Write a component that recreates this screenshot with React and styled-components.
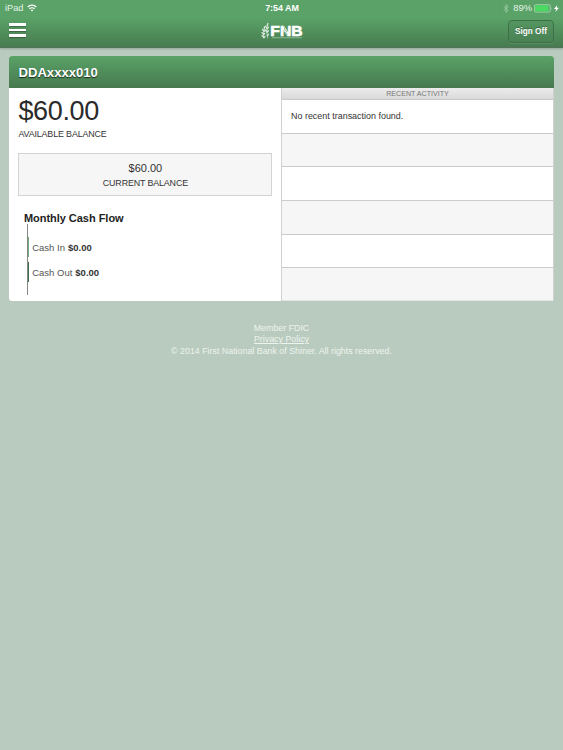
import React from 'react'
import styled, { createGlobalStyle } from 'styled-components'

const GlobalStyle = createGlobalStyle`
  * {
    box-sizing: border-box;
  }
  body {
    margin: 0;
    min-height: 100vh;
    background-color: #b9cbbe;
    color: #333;
    font-family: 'Liberation Sans', Arial, sans-serif;
  }
`

const TopBar = styled.header`
  height: 48px;
  background: linear-gradient(#5aa267 0, #5aa267 18px, #477b50 47px);
  border-bottom: 1px solid #527259;
  box-shadow: 0 1px 2px rgba(0,0,0,0.2);
  color: #fff;
`

const StatusBar = styled.div`
  display: grid;
  grid-template-columns: 1fr auto 1fr;
  align-items: center;
  height: 16px;
  padding: 0 4px 0 5px;
  font-size: 9.2px;
  line-height: 16px;
`

const StatusSide = styled.div`
  display: flex;
  align-items: center;
  justify-content: ${props => props.$end ? 'flex-end' : 'flex-start'};
  gap: ${props => props.$end ? '2px' : '3.5px'};
  color: #e6f3e8;
`

const Percent = styled.span`
  margin: 0 0 0 2px;
  font-size: 9.4px;
`

const Clock = styled.div`
  font-weight: bold;
  font-size: 8.9px;
`

const NavRow = styled.div`
  display: grid;
  grid-template-columns: 1fr auto 1fr;
  align-items: center;
  height: 30px;
  padding: 0 9px;
`

const MenuButton = styled.button`
  display: flex;
  flex-direction: column;
  gap: 3px;
  width: 17px;
  padding: 0;
  margin-top: -2px;
  border: 0;
  background: none;
`

const MenuLine = styled.span`
  height: 2.4px;
  background-color: #fff;
  box-shadow: 0 1px 1px rgba(0,0,0,0.3);
`

const SignOff = styled.button`
  justify-self: end;
  width: 46px;
  height: 23px;
  padding: 0;
  border: 1px solid #3e7048;
  border-radius: 4px;
  background: linear-gradient(#549660, #4a8154);
  box-shadow: 0 1px 0 rgba(255,255,255,0.1);
  color: #fff;
  font-family: inherit;
  font-size: 8.2px;
  font-weight: bold;
  text-shadow: 0 -1px 0 rgba(0,0,0,0.3);
`

const Account = styled.section`
  margin: 8px 9px 0;
  width: 545px;
  height: 244.5px;
  border-radius: 3px;
  overflow: hidden;
  background-color: #fff;
`

const AccountTitle = styled.h1`
  height: 32px;
  margin: 0;
  padding-left: 9.5px;
  background: linear-gradient(#5aa267, #47794f);
  color: #fff;
  font-size: 13.1px;
  line-height: 33px;
  text-shadow: 0 1px 1px rgba(0,0,0,0.7);
`

const Columns = styled.div`
  display: grid;
  grid-template-columns: 272px 273px;
  height: 212.5px;
`

const Summary = styled.div`
  padding: 8px 9px 0 9.4px;
`

const Available = styled.div`
  font-size: 27px;
  line-height: 31px;
  letter-spacing: -0.35px;
  color: #2b2b2b;
`

const Label = styled.div`
  font-size: 8.9px;
  line-height: 10px;
  letter-spacing: -0.13px;
`

const AvailableLabel = styled(Label)`
  margin-top: 2px;
`

const CurrentBox = styled.div`
  height: 43px;
  margin: 14px 0 0;
  width: 254px;
  padding-top: 8px;
  border: 1px solid #d3d3d3;
  background-color: #f6f6f6;
  text-align: center;
`

const Current = styled.div`
  margin-bottom: 3px;
  font-size: 11px;
  line-height: 13px;
`

const FlowTitle = styled.h2`
  margin: 15px 0 0 5.5px;
  font-size: 11px;
  line-height: 14px;
  letter-spacing: -0.03px;
  color: #222;
`

const FlowChart = styled.div`
  height: 71px;
  margin: -1px 0 0 8.6px;
  padding-top: 13.2px;
  border-left: 1px solid #858985;
`

const FlowRow = styled.div`
  display: flex;
  align-items: center;
  height: 20px;
  margin-bottom: 5px;
  padding-left: 3.2px;
  border-left: 1px solid ${props => props.$color};
  font-size: 9.5px;
  color: #555;

  b {
    margin-left: 3px;
    color: #333;
  }
`

const Activity = styled.div`
  display: flex;
  flex-direction: column;
  border-left: 1px solid #d0d0d0;
  border-right: 1px solid #d0d0d0;
`

const ActivityTitle = styled.div`
  height: 12px;
  border-bottom: 1px solid #c9c9c9;
  background: linear-gradient(#ececec, #d9d9d9);
  color: #777;
  font-size: 7.1px;
  line-height: 12px;
  text-align: center;
`

const ActivityRow = styled.div`
  height: 33.65px;
  display: flex;
  align-items: center;
  padding-left: 9px;
  border-bottom: 1px solid #cbcbcb;
  background-color: #fff;
  font-size: 8.95px;

  &:nth-child(odd) {
    background-color: #f6f6f6;
  }
  &:last-child {
    flex: 1;
    border-bottom-color: #e2e6e3;
  }
`

const Footer = styled.footer`
  padding-top: 22px;
  color: #edf3ee;
  font-size: 8.85px;
  line-height: 11.7px;
  text-align: center;
`

const PolicyLink = styled.a`
  color: inherit;
  text-decoration: underline;
`

const WifiIcon = () => (
  <svg width='10' height='8' viewBox='0 0 10 8' fill='none' stroke='#fff' strokeWidth='1.2'>
    <path d='M0.7 3a6 6 0 0 1 8.6 0M2.4 4.8a3.7 3.7 0 0 1 5.2 0' />
    <path d='M5 7.5L3.7 6.1a1.9 1.9 0 0 1 2.6 0z' fill='#fff' stroke='none' />
  </svg>
)

const BluetoothIcon = () => (
  <svg width='6' height='9' viewBox='0 0 6 9' fill='none' stroke='#a3cdaa' strokeWidth='0.8'>
    <path d='M0.7 2.4l4.5 4L3 8.4V0.6l2.2 2-4.5 4' />
  </svg>
)

const BatteryIcon = () => (
  <svg width='18' height='9' viewBox='0 0 18 9'>
    <rect x='0.4' y='0.7' width='15.8' height='7.4' rx='1.3' fill='none' stroke='#c3dfc7' strokeWidth='0.7' />
    <rect x='1.1' y='1.3' width='13.4' height='6.2' rx='0.5' fill='#4bd964' />
    <path d='M16.8 3q1.2 1.4 0 2.8z' fill='#c3dfc7' />
  </svg>
)

const BoltIcon = () => (
  <svg width='5' height='7' viewBox='0 0 5 7'>
    <path d='M3.2 0L0 4h2L1.4 7 5 2.8H2.8z' fill='#fff' />
  </svg>
)

const Logo = () => (
  <svg width='42' height='18' viewBox='0 0 42 18'>
    <g fill='none' stroke='#dceddf' strokeWidth='1.3' strokeLinecap='round'>
      <path d='M2.8 16.2Q1.8 12 3.2 6.2M6.6 16Q4.6 10 6.2 4' strokeWidth='0.6' />
      <path d='M3.4 5v1.6M1.4 7.4l1.1 1.3M3.9 8.3l-1 1.2M1 10.6l1.2 1.3M3.7 11.4l-1.2 1.3M1.1 13.8l1.3 1.3M4 14.4l-1 1.2' />
      <path d='M6.8 1.3L6.3 3.6M4.7 4.3l1 1.7M7.4 5.2L6.3 7M4.5 8l1.1 1.5M7.4 8.8l-1.3 1.4M7.5 12.3l-1.2 1.4' />
    </g>
    <text x='9.3' y='13.5' fill='#fff' fontFamily='Liberation Sans, Arial, sans-serif' fontSize='15' fontWeight='bold' stroke='#fff' strokeWidth='0.6' textLength='32.3' lengthAdjust='spacingAndGlyphs'>FNB</text>
    <path d='M22.5 4l1.7 2-1.2 1.2 2.6 1.8-0.8 1.8 1.8 2.2' fill='none' stroke='#51905c' strokeWidth='0.6' />
    <path d='M11 15.7h30' stroke='#a5cbac' strokeWidth='0.7' />
  </svg>
)

const emptyRows = [1, 2, 3, 4, 5]

const App = () => {
  return (
    <>
      <GlobalStyle />
      <TopBar>
        <StatusBar>
          <StatusSide>iPad<WifiIcon /></StatusSide>
          <Clock>7:54 AM</Clock>
          <StatusSide $end>
            <BluetoothIcon />
            <Percent>89%</Percent>
            <BatteryIcon />
            <BoltIcon />
          </StatusSide>
        </StatusBar>
        <NavRow>
          <MenuButton aria-label='Menu'>
            <MenuLine />
            <MenuLine />
            <MenuLine />
          </MenuButton>
          <Logo />
          <SignOff>Sign Off</SignOff>
        </NavRow>
      </TopBar>
      <Account>
        <AccountTitle>DDAxxxx010</AccountTitle>
        <Columns>
          <Summary>
            <Available>$60.00</Available>
            <AvailableLabel>AVAILABLE BALANCE</AvailableLabel>
            <CurrentBox>
              <Current>$60.00</Current>
              <Label>CURRENT BALANCE</Label>
            </CurrentBox>
            <FlowTitle>Monthly Cash Flow</FlowTitle>
            <FlowChart>
              <FlowRow $color='#75aa7d'>Cash In <b>$0.00</b></FlowRow>
              <FlowRow $color='#3f6d49'>Cash Out <b>$0.00</b></FlowRow>
            </FlowChart>
          </Summary>
          <Activity>
            <ActivityTitle>RECENT ACTIVITY</ActivityTitle>
            <ActivityRow>No recent transaction found.</ActivityRow>
            {emptyRows.map(row => <ActivityRow key={row} />)}
          </Activity>
        </Columns>
      </Account>
      <Footer>
        <div>Member FDIC</div>
        <div><PolicyLink>Privacy Policy</PolicyLink></div>
        <div>© 2014 First National Bank of Shiner. All rights reserved.</div>
      </Footer>
    </>
  )
}

export default App
